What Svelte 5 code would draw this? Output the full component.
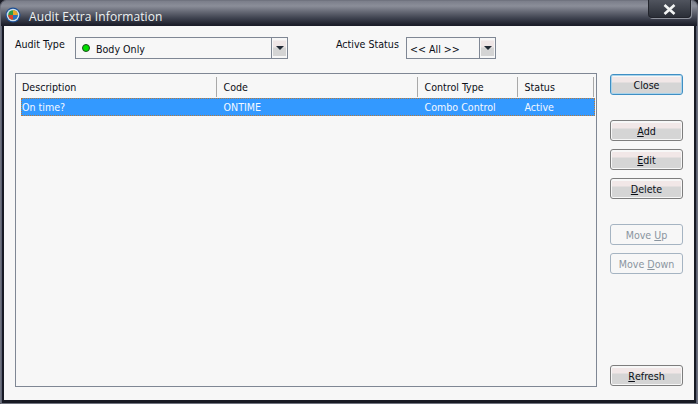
<script>
  const columns = [
    { label: 'Description', width: 196 },
    { label: 'Code', width: 201 },
    { label: 'Control Type', width: 100 },
    { label: 'Status', width: 76 }
  ];

  const row = ['On time?', 'ONTIME', 'Combo Control', 'Active'];
</script>

<div class="window">
  <div class="titlebar">
    <svg class="app-icon" width="16" height="16" viewBox="0 0 16 16">
      <circle cx="8" cy="8" r="7.5" fill="#1c4f96" />
      <circle cx="8" cy="8" r="6.3" fill="#cfe0ee" />
      <circle cx="8" cy="8" r="4.8" fill="#2f9a44" />
      <path d="M8 3.2a4.8 4.8 0 0 1 4.8 4.8H8z" fill="#e8a52c" />
      <path d="M8 8h4.8a4.8 4.8 0 0 1-4.8 4.8z" fill="#2a6fc0" />
      <path d="M3.2 8H8v4.8A4.8 4.8 0 0 1 3.2 8z" fill="#d9442b" />
    </svg>
    <span class="title">Audit Extra Information</span>
    <div class="win-close">
      <svg width="13" height="11" viewBox="0 0 13 11">
        <path d="M1.5 1 L11.5 10 M11.5 1 L1.5 10" stroke="#f2f4f4" stroke-width="2.6" fill="none" />
      </svg>
    </div>
  </div>

  <div class="client">
    <div class="main">
      <div class="filters">
        <span class="label first">Audit Type</span>
        <div class="combo audit">
          <span class="combo-text">
            <i class="dot"></i>
            Body Only
          </span>
          <span class="arrow"><i></i></span>
        </div>
        <span class="label second">Active Status</span>
        <div class="combo status">
          <span class="combo-text">&lt;&lt; All &gt;&gt;</span>
          <span class="arrow"><i></i></span>
        </div>
      </div>

      <div class="list">
        <div class="list-head">
          {#each columns as col}
            <div class="head-cell" style="width: {col.width}px">{col.label}</div>
          {/each}
        </div>
        <div class="list-row">
          {#each row as cell, i}
            <div class="cell" style="width: {columns[i].width}px">{cell}</div>
          {/each}
        </div>
      </div>
    </div>

    <div class="side">
      <button class="btn default">Close</button>
      <div class="group actions">
        <button class="btn"><u>A</u>dd</button>
        <button class="btn"><u>E</u>dit</button>
        <button class="btn"><u>D</u>elete</button>
      </div>
      <div class="group moves">
        <button class="btn" disabled>Move <u>U</u>p</button>
        <button class="btn" disabled>Move <u>D</u>own</button>
      </div>
      <button class="btn refresh"><u>R</u>efresh</button>
    </div>
  </div>
</div>

<style>
  :global(body) {
    margin: 0;
    background: #1b1c26;
  }

  .window {
    box-sizing: border-box;
    width: 698px;
    height: 404px;
    display: flex;
    flex-direction: column;
    font-family: "DejaVu Sans", Verdana, sans-serif;
    font-stretch: condensed;
    font-size: 10.6px;
    color: #0b0e16;
    background: #181a24;
    border: 1px solid #70737f;
    border-radius: 6px 6px 0 0;
    padding: 0 3px 3px 3px;
    box-shadow: inset 1px 0 0 #5b6072, inset -1px 0 0 #5b6072;
  }

  .titlebar {
    height: 25px;
    flex: none;
    display: flex;
    align-items: flex-start;
    margin: 0 -3px;
    padding: 0 3px 0 4px;
    background: linear-gradient(#7b7e8a 0, #8b8e99 5px, #646773 11px, #3f4350 17px, #1c1e2a 24px);
    border-radius: 5px 5px 0 0;
  }

  .app-icon {
    margin-top: 6px;
    flex: none;
  }

  .title {
    margin: 8px 0 0 8px;
    font-family: "Open Sans", sans-serif;
    font-stretch: normal;
    font-size: 12px;
    letter-spacing: 0.1px;
    line-height: 15px;
    color: #eef2f2;
  }

  .win-close {
    box-sizing: border-box;
    margin-left: auto;
    margin-right: 3px;
    margin-top: -1px;
    width: 43px;
    height: 18px;
    display: flex;
    align-items: center;
    justify-content: center;
    padding-top: 2px;
    border: 1px solid #22242c;
    border-top: none;
    border-radius: 0 0 4px 4px;
    background: linear-gradient(#50545e, #2b2f38);
    box-shadow: 1px 1px 0 #8e929c;
  }

  .client {
    flex: 1;
    display: flex;
    background: #f7f7f7;
    padding: 11px 10px 13px 11px;
    gap: 13px;
    min-height: 0;
  }

  .main {
    width: 582px;
    display: flex;
    flex-direction: column;
  }

  .filters {
    height: 22px;
    display: flex;
    margin-bottom: 14px;
  }

  .label {
    line-height: 14px;
  }

  .label.first {
    width: 60px;
  }

  .label.second {
    margin-left: 48px;
    width: 70px;
  }

  .combo {
    box-sizing: border-box;
    height: 22px;
    display: flex;
    background: #f7f7f7;
    border: 1px solid #7f8794;
  }

  .combo.audit {
    width: 213px;
  }

  .combo.status {
    width: 90px;
  }

  .combo-text {
    flex: 1;
    display: flex;
    align-items: center;
    gap: 6px;
    padding-left: 3px;
    padding-top: 2px;
  }

  .audit .combo-text {
    padding-left: 6px;
  }

  .dot {
    width: 6px;
    height: 6px;
    border-radius: 50%;
    background: #00e000;
    border: 1px solid #1f4a1f;
    margin-top: -2px;
  }

  .arrow {
    box-sizing: border-box;
    width: 16px;
    flex: none;
    border-left: 1px solid #7f8794;
    display: flex;
    align-items: center;
    justify-content: center;
    background: linear-gradient(#f7f7f7 0, #f7f7f7 2px, #efe6e6 3px, #efe6e6 9px, #d4d4d4 10px, #d4d4d4 18px, #f7f7f7 18px);
    background-size: 13px 100%;
    background-position: 1px 0;
    background-repeat: no-repeat;
  }

  .arrow i {
    width: 0;
    height: 0;
    border-left: 4px solid transparent;
    border-right: 4px solid transparent;
    border-top: 4px solid #222a35;
    margin-top: -1px;
  }

  .list {
    box-sizing: border-box;
    flex: 1;
    border: 1px solid #7f8794;
    padding-left: 5px;
    padding-top: 3px;
  }

  .list-head {
    display: flex;
    height: 21px;
  }

  .head-cell {
    box-sizing: border-box;
    height: 20px;
    line-height: 20px;
    padding-left: 1px;
    border-right: 1px solid #a9a9a9;
  }

  .head-cell + .head-cell {
    padding-left: 6.5px;
  }

  .list-row {
    box-sizing: border-box;
    display: flex;
    width: 574px;
    height: 18px;
    background: #3399ff;
    color: #f4f8ff;
    outline: 1px dotted #b5793c;
    outline-offset: -1px;
    line-height: 19px;
  }

  .cell {
    box-sizing: border-box;
    padding-left: 1px;
    white-space: nowrap;
  }

  .cell + .cell {
    padding-left: 6.5px;
  }

  .side {
    width: 73px;
    display: flex;
    flex-direction: column;
    padding-top: 37px;
  }

  .group {
    display: flex;
    flex-direction: column;
    gap: 8px;
  }

  .actions,
  .moves {
    margin-top: 25px;
  }

  .btn {
    box-sizing: border-box;
    width: 73px;
    height: 21px;
    padding: 0;
    font: inherit;
    color: #0b0e16;
    border: 1px solid #7d7d7d;
    border-radius: 3px;
    background: linear-gradient(#f7f7f7 0, #f7f7f7 2px, #f1e7e7 2px, #f1e7e7 7px, #d5d5d5 8px, #d5d5d5 18px, #f5f5f5 18px);
    box-shadow: inset 0 0 0 1px #f7f7f7;
    display: flex;
    align-items: center;
    justify-content: center;
    white-space: pre;
  }

  .btn.default {
    border-color: #3f8fc4;
    box-shadow: inset 0 0 0 1px #a9d3ea;
  }

  .btn:disabled {
    color: #8a959f;
    background: #f7f7f7;
    border-color: #a5b4c2;
  }

  .refresh {
    margin-top: auto;
    margin-bottom: 1px;
  }
</style>
